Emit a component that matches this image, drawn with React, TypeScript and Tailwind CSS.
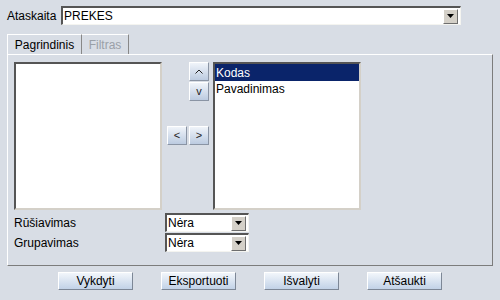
import React from "react";

const font = { fontFamily: '"Liberation Sans", Arial, sans-serif' };

function Arrow() {
  return (
    <svg width="7" height="4" viewBox="0 0 7 4">
      <path d="M0 0h7L3.5 4z" fill="#000" />
    </svg>
  );
}

function Select({ value, w }: { value: string; w: string }) {
  return (
    <div
      className={`${w} h-[19px] flex items-center bg-white border-t-2 border-l-2 border-t-[#555] border-l-[#555] border-b border-r border-b-[#f4f4f0] border-r-[#f4f4f0]`}
    >
      <span className="flex-1 pl-[1px] text-[12px] leading-none text-black">{value}</span>
      <div className="w-[15px] h-[15px] mr-[2px] flex items-center justify-center bg-[#d4d0c8] border border-t-white border-l-white border-b-[#6e6e6e] border-r-[#6e6e6e]">
        <Arrow />
      </div>
    </div>
  );
}

function SmallBtn({ children }: { children: React.ReactNode }) {
  return (
    <div className="w-[20px] h-[19px] flex items-center justify-center text-[11px] text-[#222] bg-gradient-to-b from-[#f0f4fa] to-[#bccbe0] border border-t-white border-l-white border-b-[#8a94a4] border-r-[#8a94a4]">
      {children}
    </div>
  );
}

function Btn({ children }: { children: React.ReactNode }) {
  return (
    <div className="w-[75px] h-[18px] flex items-center justify-center text-[12px] text-black bg-gradient-to-b from-[#f2f6fb] to-[#c2d2e7] border border-t-white border-l-white border-b-[#7d8796] border-r-[#7d8796]">
      {children}
    </div>
  );
}

function ListBox({ children }: { children?: React.ReactNode }) {
  return (
    <div className="w-[148px] h-[148px] bg-white border-t-2 border-l-2 border-t-[#555] border-l-[#555] border-b-2 border-r-2 border-b-[#d4d0c8] border-r-[#d4d0c8] overflow-hidden">
      {children}
    </div>
  );
}

export default function App() {
  return (
    <div className="w-[500px] h-[300px] bg-[#d8dde5] text-black overflow-hidden" style={font}>
      <div className="flex items-center pt-[6px] pl-[7px] h-[25px]">
        <span className="w-[54px] text-[12px] leading-none">Ataskaita</span>
        <Select value="PREKES" w="w-[400px]" />
      </div>
      <div className="flex pl-[7px] mt-[9px] h-[20px]">
        <div className="w-[75px] flex items-center justify-center text-[12px] border-t border-l border-t-white border-l-white border-r border-r-[#888]">
          Pagrindinis
        </div>
        <div className="w-[47px] flex items-center justify-center text-[12px] text-[#9aa0a8] border-t border-t-white border-r border-r-[#888]">
          Filtras
        </div>
      </div>
      <div className="ml-[7px] w-[486px] h-[212px] border-t border-l border-t-white border-l-white border-r border-b border-r-[#7c7c7c] border-b-[#7c7c7c] pt-[7px] pl-[6px]">
        <div className="flex">
          <ListBox />
          <div className="w-[51px] flex flex-col items-end pr-[4px]">
            <SmallBtn>
              <svg width="8" height="5" viewBox="0 0 8 5"><path d="M0.5 4.5L4 1l3.5 3.5" fill="none" stroke="#222" strokeWidth="1" /></svg>
            </SmallBtn>
            <div className="mt-[1px]">
              <SmallBtn>v</SmallBtn>
            </div>
            <div className="flex gap-[2px] mt-[25px]">
              <SmallBtn>&lt;</SmallBtn>
              <SmallBtn>&gt;</SmallBtn>
            </div>
          </div>
          <ListBox>
            <div className="h-[17px] flex items-center pl-[1px] bg-[#0a246a] text-white text-[12px]">Kodas</div>
            <div className="h-[16px] flex items-center pl-[1px] text-[12px]">Pavadinimas</div>
          </ListBox>
        </div>
        <div className="flex items-center mt-[3px] h-[19px]">
          <span className="w-[151px] text-[12px] leading-none">Rūšiavimas</span>
          <Select value="Nėra" w="w-[84px]" />
        </div>
        <div className="flex items-center mt-[1px] h-[19px]">
          <span className="w-[151px] text-[12px] leading-none">Grupavimas</span>
          <Select value="Nėra" w="w-[84px]" />
        </div>
      </div>
      <div className="flex gap-[28px] pl-[58px] mt-[6px]">
        <Btn>Vykdyti</Btn>
        <Btn>Eksportuoti</Btn>
        <Btn>Išvalyti</Btn>
        <Btn>Atšaukti</Btn>
      </div>
    </div>
  );
}
